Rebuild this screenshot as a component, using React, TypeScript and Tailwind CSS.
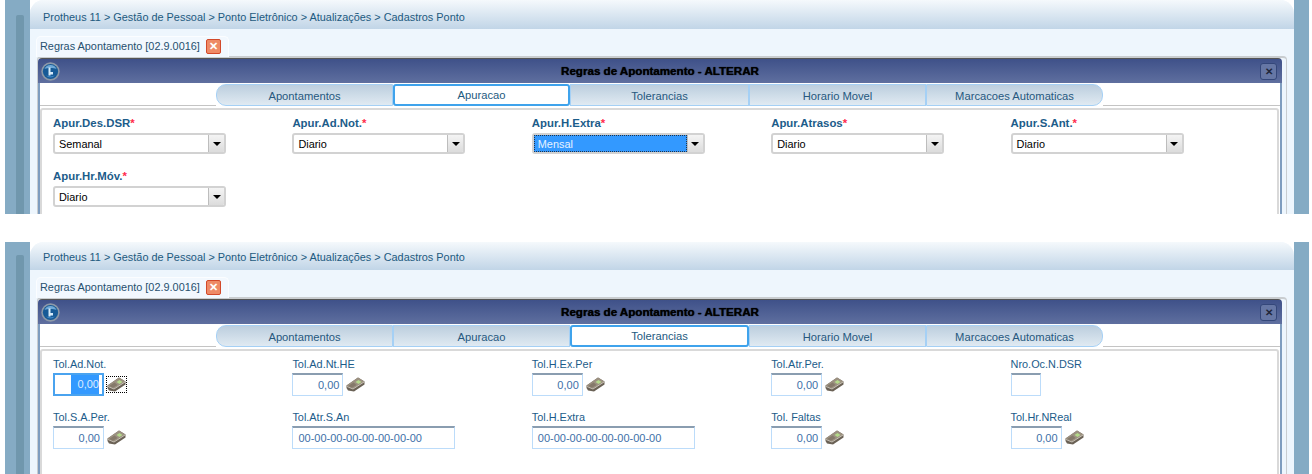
const tabs = ['Apontamentos', 'Apuracao', 'Tolerancias', 'Horario Movel', 'Marcacoes Automaticas'];

function Globe() {
    return (
        <svg width="19" height="19" viewBox="0 0 19 19">
            <circle cx="9.5" cy="9.5" r="9.2" fill="#8d99a8" />
            <circle cx="9.5" cy="9.5" r="7.6" fill="#175a96" />
            <path d="M3.500 7a6.500 6.500 0 0 1 12 0c-3-1.200-9-1.200-12 0z" fill="#6fa9d8" />
            <path d="M7.500 5.500h2v4.500h2.500v2.500h-2.500v1h-2z" fill="#d7ecfa" />
            <path d="M5 13.500a6 6 0 0 0 9 0c-3 1-6 1-9 0z" fill="#3d86c4" />
        </svg>
    );
}

function CashIcon() {
    return (
        <svg width="19" height="15" viewBox="0 0 19 15">
            <path d="M0.500 8.500 12 0.500 18.500 4.500 18.500 7.500 8 14.500 2 13.500 0.500 11z" fill="#6b6256" />
            <path d="M0.500 8.500 12 0.500 18.500 4.500 7 11.500z" fill="#9c9181" />
            <path d="M9.500 5 12.500 3 15.500 5 12.500 7z" fill="#b4d98a" />
            <path d="M2.500 8.800 7.500 5.500 10.500 8 5.500 11z" fill="#85796a" />
            <path d="M1 9.500 7 12 18 5" fill="none" stroke="#ddd7cb" strokeWidth="0.8" />
        </svg>
    );
}

function ComboField({ label, value, focused = false }: { label: string; value: string; focused?: boolean }) {
    return (
        <div>
            <p className="h-[14px] text-[11.4px] leading-[14px] font-bold text-[#1c5c8a]">
                {label}<span className="text-[#ff2a4a]">*</span>
            </p>
            <div className="mt-[3px] flex h-[21px] w-[173px] overflow-hidden rounded-[3px] border-2 border-[#d2d2d2] bg-white">
                <div className={focused
                    ? 'flex-1 border border-dotted border-[#20344a] bg-[#3399ff] pl-[3px] text-[10.9px] leading-[17px] text-[#e6f2ff]'
                    : 'flex-1 pl-[4px] text-[10.9px] leading-[19px] text-black'}>
                    {value}
                </div>
                <div className="flex w-[16px] items-center justify-center border-l border-[#bdbdbd] bg-gradient-to-b from-[#f4f4f4] to-[#dcdcdc] pt-[1px]">
                    <div className="h-0 w-0 border-x-[4px] border-t-[4px] border-x-transparent border-t-black" />
                </div>
            </div>
        </div>
    );
}

function ValueField({ label, value = '0,00', width = 'w-[51px]', cash = true, focused = false, left = false }: {
    label: string; value?: string; width?: string; cash?: boolean; focused?: boolean; left?: boolean;
}) {
    return (
        <div>
            <p className="h-[14px] text-[10.9px] leading-[14px] text-[#1c5c8a]">{label}</p>
            <div className="mt-[2px] flex items-center">
                <div className={`h-[23px] ${width} flex items-center bg-white ${focused ? 'border-2 border-[#4aa3ef]' : 'border border-t-2 border-[#bcdcfa] border-t-[#8a9db0]'} ${left ? 'justify-start pl-[5px]' : 'justify-end pr-[3px]'}`}>
                    <span className={focused
                        ? 'bg-[#3399ff] pl-[7px] text-[11px] leading-[19px] text-[#dcecff]'
                        : 'text-[11px] leading-[19px] text-[#3d6fa8]'}>
                        {value}
                    </span>
                </div>
                {cash && (
                    <div className={focused ? 'ml-[2px] h-[17px] border border-dotted border-black' : 'ml-[2px] h-[17px] border border-transparent'}>
                        <CashIcon />
                    </div>
                )}
            </div>
        </div>
    );
}

function Panel({ active, second = false, children }: { active: string; second?: boolean; children: React.ReactNode }) {
    return (
        <section className={second
            ? 'mt-[28px] flex h-[232px] w-[1309px] overflow-hidden pl-[5px]'
            : 'flex h-[214px] w-[1309px] overflow-hidden pl-[5px]'}>
            {/* side rail */}
            <div className={second ? 'w-[25px] bg-[#85abc4] pt-[13px] pl-[11px]' : 'w-[25px] bg-[#85abc4] pt-[15px] pl-[11px]'}>
                <div className="h-full w-[8px] rounded-t-[2px] bg-[#7097ad]" />
            </div>

            <div className="w-[1264px] overflow-hidden rounded-t-[14px] bg-[#eef6fd]">
                {/* breadcrumb */}
                <div className={second
                    ? 'h-[28px] bg-gradient-to-b from-[#f5f9fc] to-[#c1d5e7] pl-[13px] text-[10.9px] leading-[31px] text-[#1d5a80]'
                    : 'h-[29px] bg-gradient-to-b from-[#f5f9fc] to-[#c1d5e7] pl-[13px] text-[10.9px] leading-[34px] text-[#1d5a80]'}>
                    Protheus 11 &gt; Gestão de Pessoal &gt; Ponto Eletrônico &gt; Atualizações &gt; Cadastros Ponto
                </div>

                {/* open document tab */}
                <div className="relative z-10 mt-[7px] ml-[6px] -mb-[1px] flex h-[21px] w-[193px] items-center rounded-t-[5px] border-x border-t border-[#fbfdff] bg-[#f2f8fe] pb-[2px] pl-[3px]">
                    <span className="text-[10.9px] text-[#27506e]">Regras Apontamento [02.9.0016]</span>
                    <span className="ml-[6px] flex h-[15px] w-[15px] items-center justify-center rounded-[2px] border border-[#d2492a] bg-[#ee8a66] text-[11px] leading-none font-bold text-white">✕</span>
                </div>

                {/* window */}
                <div className="ml-[7px] h-[400px] w-[1250px] rounded-t-[4px] border-x border-t-2 border-[#c9cdd0]">
                    <div className="h-full w-[1244px] overflow-hidden rounded-t-[4px] bg-white">
                        <div className="flex h-[25px] items-center justify-between border-t border-[#555] bg-gradient-to-b from-[#3f5189] to-[#5f6f9f] pr-[5px] pl-[3px]">
                            <Globe />
                            <span className="text-[11.6px] font-bold text-black [text-shadow:0_0_1px_#000]">Regras de Apontamento - ALTERAR</span>
                            <span className="flex h-[17px] w-[17px] items-center justify-center rounded-[3px] border border-[#34477a] bg-[#6677a5] text-[10px] font-bold text-[#20263a]">✕</span>
                        </div>

                        <div className="h-full border-x-2 border-[#7f9dbf]">
                            <div className="flex h-[23px] items-end pt-[1px]">
                                <div className="h-[1px] w-[176px] bg-[#c4c4c4]" />
                                {tabs.map((t, i) => (
                                    <div key={t} className={
                                        (t === active
                                            ? 'rounded-[3px] border-2 border-[#3fa3ec] bg-white text-[#1d5a80] '
                                            : 'border border-[#a5d0f5] bg-gradient-to-b from-[#bccede] to-[#e0eaf2] pt-[2px] text-[#26587e] ') +
                                        (i === 0 ? 'rounded-l-[10px] ' : '') +
                                        (i === 4 ? 'rounded-r-[10px] ' : '') +
                                        (i === 2 ? 'w-[179px] ' : 'w-[177px] ') +
                                        'flex h-full items-center justify-center text-[11.2px]'
                                    }>
                                        {t}
                                    </div>
                                ))}
                                <div className="h-[1px] flex-1 bg-[#c4c4c4]" />
                            </div>

                            <div className="mt-[2px] h-full w-[1239px] rounded-t-[3px] border-2 border-[#d9d9d9] bg-white">
                                {children}
                            </div>
                        </div>
                    </div>
                </div>
            </div>

            <div className="w-[15px] bg-[#85abc4]" />
        </section>
    );
}

export default function App() {
    return (
        <main className="h-[474px] w-[1312px] overflow-hidden bg-white font-['Liberation_Sans',sans-serif]">
            <Panel active="Apuracao">
                <div className="grid grid-cols-[repeat(5,239.4px)] gap-y-[15px] pt-[6px] pl-[11px]">
                    <ComboField label="Apur.Des.DSR" value="Semanal" />
                    <ComboField label="Apur.Ad.Not." value="Diario" />
                    <ComboField label="Apur.H.Extra" value="Mensal" focused />
                    <ComboField label="Apur.Atrasos" value="Diario" />
                    <ComboField label="Apur.S.Ant." value="Diario" />
                    <ComboField label="Apur.Hr.Móv." value="Diario" />
                </div>
            </Panel>
            <Panel active="Tolerancias" second>
                <div className="grid grid-cols-[repeat(5,239.4px)] gap-y-[14px] pt-[6px] pl-[11px]">
                    <ValueField label="Tol.Ad.Not." focused />
                    <ValueField label="Tol.Ad.Nt.HE" />
                    <ValueField label="Tol.H.Ex.Per" />
                    <ValueField label="Tol.Atr.Per." />
                    <ValueField label="Nro.Oc.N.DSR" value="" width="w-[30px]" cash={false} />
                    <ValueField label="Tol.S.A.Per." />
                    <ValueField label="Tol.Atr.S.An" value="00-00-00-00-00-00-00-00" width="w-[163px]" cash={false} left />
                    <ValueField label="Tol.H.Extra" value="00-00-00-00-00-00-00-00" width="w-[163px]" cash={false} left />
                    <ValueField label="Tol. Faltas" />
                    <ValueField label="Tol.Hr.NReal" />
                </div>
            </Panel>
        </main>
    );
}
